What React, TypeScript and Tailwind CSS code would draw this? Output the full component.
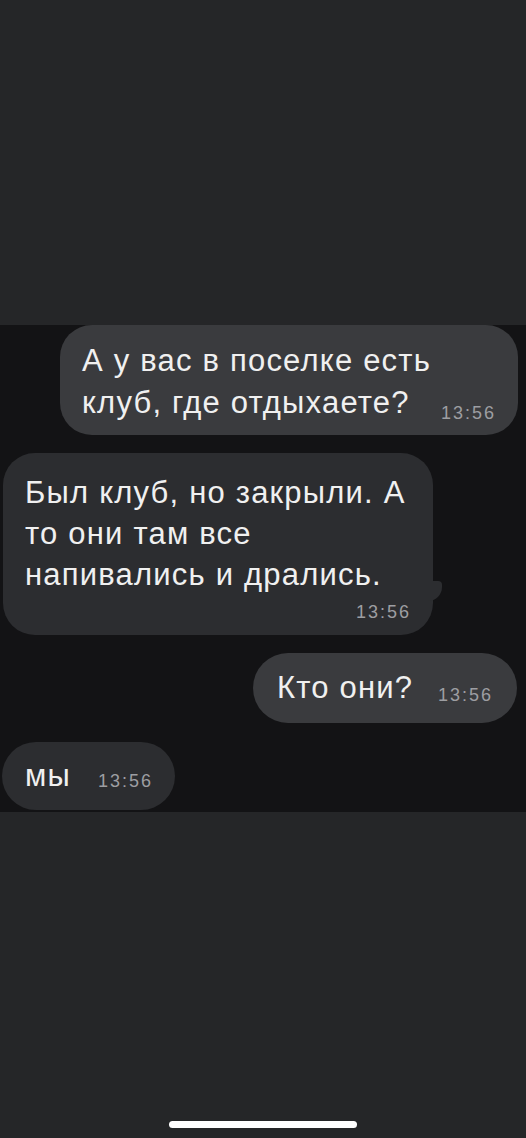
import React from 'react';

const font = { fontFamily: '"Liberation Sans", Arial, sans-serif' };

const Time: React.FC<{ className?: string }> = ({ className = '' }) => (
  <span className={`text-[18px] leading-none tracking-[2px] text-[#9d9ea2] ${className}`}>13:56</span>
);

export default function App() {
  return (
    <div className="w-[526px] h-[1138px] bg-[#252628] flex flex-col overflow-hidden" style={font}>
      <div className="h-[325px] shrink-0" />

      {/* chat */}
      <div className="h-[487px] shrink-0 bg-[#131315] flex flex-col">
        <div className="ml-[60px] w-[458px] h-[110px] rounded-[32px] bg-[#3a3b3e] pl-[22px] pr-[22px] pt-[15px] text-[31px] leading-[42px] tracking-[1.2px] text-[#f0f0f0]">
          <div>А у вас в поселке есть</div>
          <div className="flex items-baseline justify-between">
            <span>клуб, где отдыхаете?</span>
            <Time className="translate-y-[6px]" />
          </div>
        </div>

        <div className="relative mt-[18px] ml-[3px] w-[430px] h-[182px] rounded-[32px] bg-[#2c2d30] pl-[22px] pr-[22px] pt-[19px] text-[31px] leading-[41px] tracking-[1.2px] text-[#f0f0f0]">
          <div>Был клуб, но закрыли. А</div>
          <div>то они там все</div>
          <div>напивались и дрались.</div>
          <div className="flex justify-end mt-[8px]">
            <Time />
          </div>
          <div className="absolute right-[-9px] bottom-[34px] w-[14px] h-[20px] bg-[#2c2d30] rounded-br-[14px] rounded-tr-[4px]" />
        </div>

        <div className="mt-[18px] ml-auto mr-[9px] w-[264px] h-[70px] rounded-[35px] bg-[#3a3b3e] pl-[24px] pr-[24px] flex items-center justify-between text-[31px] tracking-[1.2px] text-[#f0f0f0]">
          <span>Кто они?</span>
          <Time className="translate-y-[7px]" />
        </div>

        <div className="mt-[19px] ml-[2px] w-[173px] h-[68px] rounded-[34px] bg-[#2c2d30] pl-[23px] pr-[22px] flex items-center justify-between text-[31px] tracking-[1.2px] text-[#f0f0f0]">
          <span>мы</span>
          <Time className="translate-y-[5px]" />
        </div>
      </div>

      <div className="flex-1 flex items-end justify-center pb-[10px]">
        <div className="w-[188px] h-[7px] rounded-full bg-white" />
      </div>
    </div>
  );
}
